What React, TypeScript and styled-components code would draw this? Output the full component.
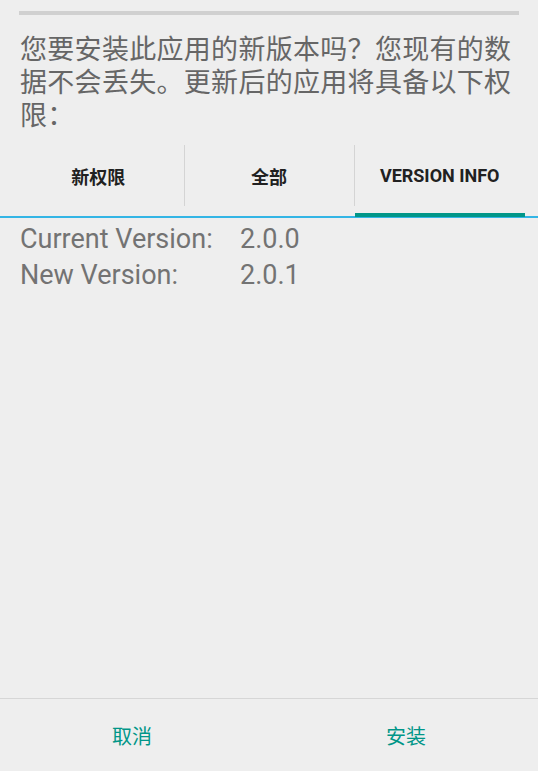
import React from 'react';
import styled, { createGlobalStyle } from 'styled-components';

const GlobalStyle = createGlobalStyle`
    html, body, #root {
        margin: 0;
        padding: 0;
        height: 100%;
    }
    body {
        background-color: #eeeeee;
        font-family: Roboto, "Noto Sans CJK SC", sans-serif;
    }
`;

export const Wrapper = styled.div`
    display: flex;
    flex-direction: column;
    height: 100vh;
    overflow: hidden;
    background-color: #eeeeee;
`;

export const TopBar = styled.div`
    height: 4px;
    margin: 11px 19px 0 19px;
    background-color: #d0d0d0;
`;

export const Message = styled.div`
    padding: 19px 20px 0 20px;
    font-family: Roboto, "Noto Sans CJK SC", sans-serif;
    font-size: 27px;
    line-height: 33px;
    color: #666666;
    letter-spacing: 0.3px;
`;

export const TabStrip = styled.div`
    display: flex;
    flex-direction: row;
    padding: 0 13px;
    margin-top: 12px;
    border-bottom: 2px solid #33b5e5;
`;

export const Tab = styled.div<{ $active?: boolean; $divider?: boolean }>`
    flex: 1 1 0;
    position: relative;
    display: flex;
    align-items: center;
    justify-content: center;
    height: 71px;
    padding-bottom: 10px;
    font-family: Roboto, "Noto Sans CJK SC", sans-serif;
    font-size: 18px;
    font-weight: 700;
    color: #212121;
    box-sizing: border-box;

    &::before {
        content: '';
        display: ${p => (p.$divider ? 'block' : 'none')};
        position: absolute;
        left: 0;
        top: 0;
        height: 61px;
        width: 1px;
        background-color: #d4d4d4;
    }

    &::after {
        content: '';
        display: ${p => (p.$active ? 'block' : 'none')};
        position: absolute;
        left: 1px;
        right: 0;
        bottom: -1px;
        height: 4px;
        background-color: #009688;
    }
`;

export const InfoList = styled.div`
    flex: 1 1 0;
    padding: 3px 20px 0 20px;
`;

export const InfoRow = styled.div`
    display: flex;
    flex-direction: row;
    font-family: Roboto, sans-serif;
    font-size: 27px;
    line-height: 36px;
    color: #737373;
`;

export const InfoLabel = styled.span`
    width: 220px;
`;

export const ButtonBar = styled.div`
    display: flex;
    flex-direction: row;
    gap: 10px;
    height: 72px;
    border-top: 1px solid #d6d6d6;
`;

export const Button = styled.div`
    flex: 1 1 0;
    display: flex;
    align-items: center;
    justify-content: center;
    font-family: "Noto Sans CJK SC", sans-serif;
    font-size: 20px;
    color: #009688;
`;

const tabs = [
    { label: '新权限' },
    { label: '全部' },
    { label: 'VERSION INFO', active: true },
];

const rows = [
    { label: 'Current Version:', value: '2.0.0' },
    { label: 'New Version:', value: '2.0.1' },
];

export default function App() {
    return (
        <>
            <GlobalStyle />
            <Wrapper>
                <TopBar />
                <Message>您要安装此应用的新版本吗？您现有的数据不会丢失。更新后的应用将具备以下权限：</Message>
                <TabStrip>
                    {tabs.map((t, i) => (
                        <Tab key={t.label} $active={t.active} $divider={i > 0}>{t.label}</Tab>
                    ))}
                </TabStrip>
                <InfoList>
                    {rows.map(r => (
                        <InfoRow key={r.label}>
                            <InfoLabel>{r.label}</InfoLabel>
                            <span>{r.value}</span>
                        </InfoRow>
                    ))}
                </InfoList>
                <ButtonBar>
                    <Button>取消</Button>
                    <Button>安装</Button>
                </ButtonBar>
            </Wrapper>
        </>
    );
}
